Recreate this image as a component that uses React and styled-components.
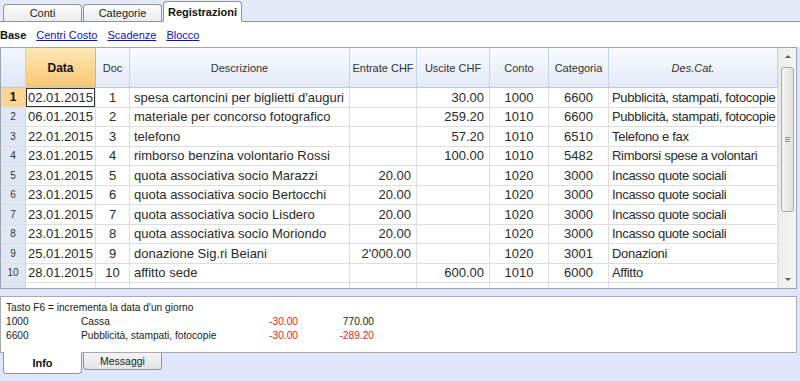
import React from 'react';
import styled, { createGlobalStyle, css } from 'styled-components';

const GlobalStyle = createGlobalStyle`
  html, body { margin: 0; padding: 0; }
  body {
    background: #dfe6f9;
    font-family: "Liberation Sans", Arial, sans-serif;
    color: #222;
  }
`;

const Window = styled.div`
  width: 800px;
  height: 381px;
  overflow: hidden;
  display: flex;
  flex-direction: column;
  background: #dfe6f9;
`;

const TabStrip = styled.div`
  height: 22px;
  box-sizing: border-box;
  display: flex;
  align-items: flex-end;
  padding-left: 3px;
  gap: 1px;
  border-bottom: 1px solid #8f959d;
  background: #e4e9f8;
`;

const Tab = styled.div`
  width: 79px;
  height: 17px;
  box-sizing: border-box;
  border: 1px solid #8f959d;
  border-bottom: none;
  border-radius: 4px 4px 0 0;
  background: linear-gradient(#fdfdfd, #ebebeb);
  font-size: 11px;
  display: flex;
  align-items: center;
  justify-content: center;
  color: #222;
  ${(p) =>
    p.$active &&
    css`
      height: 21px;
      margin-bottom: -1px;
      background: #fff;
      font-weight: bold;
      border-bottom: 1px solid #fff;
      color: #111;
    `}
`;

const SubBar = styled.div`
  height: 25px;
  background: #fff;
  display: flex;
  align-items: center;
  gap: 10px;
  font-size: 11px;
`;

const SubLabel = styled.span`
  font-weight: bold;
  color: #111;
`;

const SubLink = styled.a`
  color: #1010d0;
  text-decoration: underline;
`;

const GridPanel = styled.div`
  height: 242px;
  box-sizing: border-box;
  margin-right: 3px;
  border: 1px solid #9ea4ab;
  background: #fff;
  display: flex;
  overflow: hidden;
`;

const Table = styled.div`
  width: 777px;
  display: flex;
  flex-direction: column;
  overflow: hidden;
`;

const HeaderRow = styled.div`
  height: 40px;
  flex-shrink: 0;
  display: flex;
  box-sizing: border-box;
  border-bottom: 1px solid #b9c9e2;
`;

const HeaderCorner = styled.div`
  width: 25px;
  flex-shrink: 0;
  box-sizing: border-box;
  border-right: 1px solid #c5d3e7;
  background: linear-gradient(#f2f6fc, #dfe7f5);
`;

const HeaderCell = styled.div`
  width: ${(p) => p.$w}px;
  flex-shrink: 0;
  box-sizing: border-box;
  border-right: 1px solid #c5d3e7;
  background: linear-gradient(#f9fbfe, #e2e9f6);
  display: flex;
  align-items: center;
  justify-content: center;
  font-size: 11px;
  white-space: nowrap;
  color: #333;
  font-style: ${(p) => (p.$italic ? 'italic' : 'normal')};
  ${(p) =>
    p.$active &&
    css`
      background: linear-gradient(#fde6b8, #f8c572);
      border-right: 1px solid #eab060;
      font-weight: bold;
      font-size: 12px;
      color: #111;
    `}
`;

const BodyRow = styled.div`
  height: 19.5px;
  flex-shrink: 0;
  display: flex;
  box-sizing: border-box;
  border-bottom: 1px solid #dedede;
`;

const Cell = styled.div`
  width: ${(p) => p.$w}px;
  flex-shrink: 0;
  box-sizing: border-box;
  border-right: 1px solid #dedede;
  display: flex;
  align-items: center;
  justify-content: ${(p) =>
    p.$align === 'right' ? 'flex-end' : p.$align === 'center' ? 'center' : 'flex-start'};
  padding: ${(p) =>
    p.$align === 'right' ? '0 5px 0 0' : p.$align === 'center' ? '0' : `0 0 0 ${p.$pad}px`};
  font-size: 13px;
  letter-spacing: ${(p) => (p.$tight ? '-0.3px' : '0')};
  color: #2a2a2a;
  white-space: nowrap;
  overflow: hidden;
  ${(p) =>
    p.$selected &&
    css`
      box-shadow: inset 0 0 0 1px #333;
    `}
`;

const RowHead = styled.div`
  width: 25px;
  flex-shrink: 0;
  box-sizing: border-box;
  border-right: 1px solid #c5d3e7;
  background: #dfe7f5;
  display: flex;
  align-items: center;
  justify-content: center;
  font-size: 10px;
  color: #333;
  ${(p) =>
    p.$active &&
    css`
      background: #fbd596;
      font-weight: bold;
      font-size: 12px;
      color: #111;
    `}
`;

const ScrollBar = styled.div`
  width: 18px;
  flex-shrink: 0;
  box-sizing: border-box;
  display: flex;
  flex-direction: column;
  align-items: center;
  background: linear-gradient(90deg, #ececec, #f6f6f6);
  border-left: 1px solid #e6e6e6;
`;

const ArrowBox = styled.div`
  height: 17px;
  width: 100%;
  display: flex;
  align-items: center;
  justify-content: center;
  margin-top: ${(p) => (p.$down ? 'auto' : '0')};
`;

const Arrow = styled.div`
  width: 0;
  height: 0;
  border-left: 3px solid transparent;
  border-right: 3px solid transparent;
  ${(p) =>
    p.$down
      ? css`border-top: 3px solid #5a5a5a;`
      : css`border-bottom: 3px solid #5a5a5a;`}
`;

const Thumb = styled.div`
  margin-top: 2px;
  width: 13px;
  height: 145px;
  box-sizing: border-box;
  border: 1px solid #a8a8a8;
  border-radius: 3px;
  background: linear-gradient(90deg, #f6f6f6, #dedede);
  display: flex;
  flex-direction: column;
  align-items: center;
  justify-content: center;
  gap: 1px;
`;

const Grip = styled.div`
  width: 5px;
  height: 1px;
  background: #8a8a8a;
`;

const InfoPanel = styled.div`
  margin-top: 7px;
  margin-right: 3px;
  height: 57px;
  box-sizing: border-box;
  border: 1px solid #a9a9a9;
  background: #fff;
  padding: 4px 0 0 5px;
  font-size: 10.2px;
  line-height: 14px;
  color: #222;
  white-space: nowrap;
`;

const InfoRow = styled.div`
  display: grid;
  grid-template-columns: 75px 142px 75px 76px;
`;

const Amount = styled.span`
  text-align: right;
  color: ${(p) => (p.$neg ? '#f01818' : '#222')};
`;

const BottomTabs = styled.div`
  display: flex;
  align-items: flex-start;
  padding-left: 3px;
  gap: 1px;
`;

const BottomTab = styled.div`
  width: 79px;
  height: 17px;
  box-sizing: border-box;
  border: 1px solid #8f959d;
  border-top: none;
  border-radius: 0 0 4px 4px;
  background: linear-gradient(#f4f4f4, #e4e4e4);
  display: flex;
  align-items: center;
  justify-content: center;
  font-size: 10.5px;
  color: #222;
  ${(p) =>
    p.$active &&
    css`
      height: 22px;
      margin-top: -1px;
      background: #fff;
      font-weight: bold;
      font-size: 11px;
      border-top: 1px solid #fff;
      color: #111;
    `}
`;

const columns = [
  { w: 70, label: 'Data', active: true, align: 'left', pad: 2 },
  { w: 34, label: 'Doc', align: 'center' },
  { w: 220, label: 'Descrizione', align: 'left', pad: 4 },
  { w: 67, label: 'Entrate CHF', align: 'right' },
  { w: 73, label: 'Uscite CHF', align: 'right' },
  { w: 59, label: 'Conto', align: 'center' },
  { w: 60, label: 'Categoria', align: 'center' },
  { w: 169, label: 'Des.Cat.', italic: true, align: 'left', pad: 3, tight: true },
];

const rows = [
  ['02.01.2015', '1', "spesa cartoncini per biglietti d'auguri", '', '30.00', '1000', '6600', 'Pubblicità, stampati, fotocopie'],
  ['06.01.2015', '2', 'materiale per concorso fotografico', '', '259.20', '1010', '6600', 'Pubblicità, stampati, fotocopie'],
  ['22.01.2015', '3', 'telefono', '', '57.20', '1010', '6510', 'Telefono e fax'],
  ['23.01.2015', '4', 'rimborso benzina volontario Rossi', '', '100.00', '1010', '5482', 'Rimborsi spese a volontari'],
  ['23.01.2015', '5', 'quota associativa socio Marazzi', '20.00', '', '1020', '3000', 'Incasso quote sociali'],
  ['23.01.2015', '6', 'quota associativa socio Bertocchi', '20.00', '', '1020', '3000', 'Incasso quote sociali'],
  ['23.01.2015', '7', 'quota associativa socio Lisdero', '20.00', '', '1020', '3000', 'Incasso quote sociali'],
  ['23.01.2015', '8', 'quota associativa socio Moriondo', '20.00', '', '1020', '3000', 'Incasso quote sociali'],
  ['25.01.2015', '9', 'donazione Sig.ri Beiani', "2'000.00", '', '1020', '3001', 'Donazioni'],
  ['28.01.2015', '10', 'affitto sede', '', '600.00', '1010', '6000', 'Affitto'],
  ['', '', '', '', '', '', '', ''],
];

export default function App() {
  return (
    <Window>
      <GlobalStyle />
      <TabStrip>
        <Tab>Conti</Tab>
        <Tab>Categorie</Tab>
        <Tab $active>Registrazioni</Tab>
      </TabStrip>
      <SubBar>
        <SubLabel>Base</SubLabel>
        <SubLink>Centri Costo</SubLink>
        <SubLink>Scadenze</SubLink>
        <SubLink>Blocco</SubLink>
      </SubBar>
      <GridPanel>
        <Table>
          <HeaderRow>
            <HeaderCorner />
            {columns.map((c) => (
              <HeaderCell key={c.label} $w={c.w} $active={c.active} $italic={c.italic}>
                {c.label}
              </HeaderCell>
            ))}
          </HeaderRow>
          {rows.map((r, i) => (
            <BodyRow key={i}>
              <RowHead $active={i === 0}>{r[0] ? i + 1 : ''}</RowHead>
              {columns.map((c, j) => (
                <Cell
                  key={j}
                  $w={c.w}
                  $align={c.align}
                  $pad={c.pad}
                  $tight={c.tight}
                  $selected={i === 0 && j === 0}
                >
                  {r[j]}
                </Cell>
              ))}
            </BodyRow>
          ))}
        </Table>
        <ScrollBar>
          <ArrowBox>
            <Arrow />
          </ArrowBox>
          <Thumb>
            <Grip />
            <Grip />
            <Grip />
          </Thumb>
          <ArrowBox $down>
            <Arrow $down />
          </ArrowBox>
        </ScrollBar>
      </GridPanel>
      <InfoPanel>
        <div>Tasto F6 = incrementa la data d'un giorno</div>
        <InfoRow>
          <span>1000</span>
          <span>Cassa</span>
          <Amount $neg>-30.00</Amount>
          <Amount>770.00</Amount>
        </InfoRow>
        <InfoRow>
          <span>6600</span>
          <span>Pubblicità, stampati, fotocopie</span>
          <Amount $neg>-30.00</Amount>
          <Amount $neg>-289.20</Amount>
        </InfoRow>
      </InfoPanel>
      <BottomTabs>
        <BottomTab $active>Info</BottomTab>
        <BottomTab>Messaggi</BottomTab>
      </BottomTabs>
    </Window>
  );
}
